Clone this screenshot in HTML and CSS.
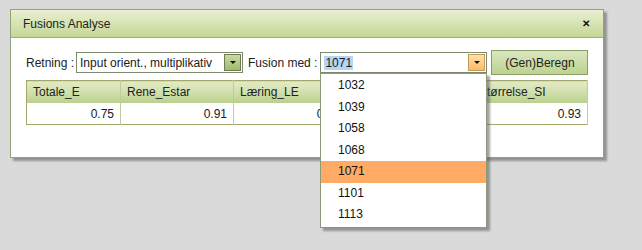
FILE: index.html
```html
<!DOCTYPE html>
<html lang="da">
<head>
  <meta charset="UTF-8">
  <title>Fusions Analyse</title>
  <link rel="stylesheet" href="styles.css">
</head>
<body>
  <div class="dialog">
    <div class="titlebar">
      <span class="title">Fusions Analyse</span>
      <span class="close">&#x2715;</span>
    </div>
    <div class="content">
      <div class="toolbar">
        <label class="lbl">Retning :</label>
        <div class="combo combo-retning">
          <span class="combo-text">Input orient., multiplikativ</span>
          <span class="combo-btn"><span class="arrow"></span></span>
        </div>
        <label class="lbl lbl-fusion">Fusion med :</label>
        <div class="combo combo-fusion">
          <span class="combo-text"><span class="sel">1071</span></span>
          <span class="combo-btn orange"><span class="arrow"></span></span>
        </div>
        <button class="calc">(Gen)Beregn</button>
      </div>
      <table class="grid">
        <thead>
          <tr>
            <th class="c1">Totale_E</th>
            <th class="c2">Rene_Estar</th>
            <th class="c3">Læring_LE</th>
            <th class="c4">Teknisk_TE</th>
            <th class="c5">Størrelse_SI</th>
          </tr>
        </thead>
        <tbody>
          <tr>
            <td>0.75</td>
            <td>0.91</td>
            <td>0.82</td>
            <td>0.89</td>
            <td>0.93</td>
          </tr>
        </tbody>
      </table>
    </div>
    <ul class="dropdown">
      <li>1032</li>
      <li>1039</li>
      <li>1058</li>
      <li>1068</li>
      <li class="active">1071</li>
      <li>1101</li>
      <li>1113</li>
    </ul>
  </div>
</body>
</html>
```

FILE: styles.css
```css
/* Page */
html, body {
  height: 100%;
}

body {
  margin: 0;
  background-color: #dadada;
  font-family: "Liberation Sans", Arial, sans-serif;
  font-size: 12px;
  color: #1a1a1a;
}

/* Dialog window */
.dialog {
  position: relative;
  margin: 9px 0 0 10px;
  width: 592px;
  height: 147px;
  background: #fff;
  border: 1px solid #8fa47a;
  box-shadow: 3px 3px 2px rgba(90, 90, 90, 0.55);
}

.titlebar {
  height: 27px;
  display: flex;
  align-items: center;
  justify-content: space-between;
  padding: 0 12px 0 12px;
  background: linear-gradient(#e9f0d2, #d3e1ad 60%, #c3d796);
  border-bottom: 1px solid #9cb07e;
}

.title {
  color: #222;
}

.close {
  font-size: 10px;
  font-weight: bold;
  color: #111;
  margin-right: 1px;
}

.content {
  padding: 12px 15px 0 15px;
}

/* Toolbar row */
.toolbar {
  display: flex;
  align-items: center;
  height: 25px;
}

.lbl {
  flex-shrink: 0;
  white-space: nowrap;
  margin-right: 2px;
  color: #222;
}

.lbl-fusion {
  margin-right: 3px;
}

.combo {
  flex-shrink: 0;
  display: flex;
  align-items: center;
  height: 19px;
  border: 1px solid #7d8a6e;
  background: #fff;
  padding: 0 1px 0 3px;
}

.combo-retning {
  width: 161px;
  margin-right: 5px;
}

.combo-fusion {
  width: 161px;
  margin-right: 4px;
}

.combo-text {
  flex: 1;
  white-space: nowrap;
  overflow: hidden;
}

.sel {
  background: #b6d4f6;
  padding: 3px 1px;
}

.combo-btn {
  width: 15px;
  height: 15px;
  display: flex;
  align-items: center;
  justify-content: center;
  border: 1px solid #6e7a55;
  background: linear-gradient(#c9dba5, #9fbb6c);
}

.combo-btn.orange {
  border-color: #c49a5c;
  background: linear-gradient(#ffe0a8, #ffbb66);
}

.arrow {
  width: 0;
  height: 0;
  border-left: 3px solid transparent;
  border-right: 3px solid transparent;
  border-top: 3px solid #111;
}

/* Popup list, hanging under the Fusion combo */
.dropdown {
  position: absolute;
  left: 309px;
  top: 63px;
  width: 165px;
  margin: 0;
  padding: 1px 0;
  list-style: none;
  background: #fff;
  border: 1px solid #8a9a7a;
  box-shadow: 3px 3px 2px rgba(90, 90, 90, 0.55);
  z-index: 2;
}

.dropdown li {
  height: 21.5px;
  line-height: 21.5px;
  padding-left: 17px;
  color: #111;
}

.dropdown li.active {
  background: #ffab66;
}

.calc {
  flex-shrink: 0;
  width: 97px;
  height: 25px;
  font-family: inherit;
  font-size: 12px;
  color: #222;
  border: 1px solid #8a9c6a;
  background: linear-gradient(#dbe7bf, #bcd28f);
  padding: 0;
}

/* Result table */
.grid {
  margin-top: 5px;
  width: 562px;
  border-collapse: collapse;
  border: 1px solid #a3a76a;
}

.grid th {
  height: 22px;
  padding: 0 6px;
  text-align: left;
  font-weight: normal;
  color: #222;
  background: linear-gradient(#e3ebc8, #cfdea9 55%, #b9cf8c);
  border-right: 1px solid #c3c99a;
}

.grid td {
  height: 21px;
  padding: 0 6px;
  text-align: right;
  border-right: 1px solid #c3c99a;
}

.c1 { width: 81px; }
.c2 { width: 100px; }
.c3 { width: 100px; }
.c4 { width: 113px; }
```
